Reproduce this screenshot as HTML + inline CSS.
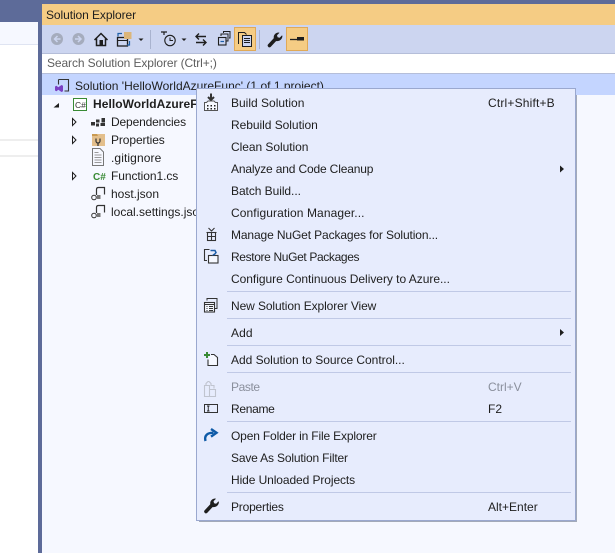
<!DOCTYPE html>
<html><head><meta charset="utf-8"><style>
html,body{margin:0;padding:0}
body{width:615px;height:553px;overflow:hidden;position:relative;background:#fff;font-family:"Liberation Sans",sans-serif;font-size:12px;color:#1e1e1e}
.a{position:absolute}
.t{position:absolute;white-space:nowrap;line-height:22px;height:22px}
.m{left:231px}
.k{left:488px}
.s{position:absolute;left:227px;width:344px;height:1px;background:#c0c9e6}
svg{position:absolute;overflow:visible}
.tree{left:111px}
</style></head><body>
<div class="a" style="left:0;top:0;width:615px;height:4px;background:#5d6b99"></div>
<div class="a" style="left:0;top:0;width:42px;height:22px;background:#5d6b99"></div>
<div class="a" style="left:0;top:22px;width:38px;height:23px;background:#f6f8ff"></div>
<div class="a" style="left:0;top:44px;width:38px;height:1px;background:#dfe4f2"></div>
<div class="a" style="left:0;top:139px;width:38px;height:2px;background:#eeeeee"></div>
<div class="a" style="left:0;top:155px;width:38px;height:2px;background:#eeeeee"></div>
<div class="a" style="left:38px;top:22px;width:4px;height:531px;background:#5d6b99"></div>
<div class="a" style="left:42px;top:4px;width:573px;height:21px;background:#f5cc84"></div>
<div class="t" style="left:46px;top:5px;line-height:21px;color:#1e1e1e;letter-spacing:-.08px">Solution Explorer</div>
<div class="a" style="left:42px;top:25px;width:573px;height:28px;background:#ccd5f0"></div>
<div class="a" style="left:42px;top:53px;width:573px;height:21px;background:#fff;border-top:1px solid #b5bed9;border-bottom:1px solid #b5bed9;box-sizing:border-box"></div>
<div class="t" style="left:47px;top:53px;line-height:21px;color:#5e5e5e;letter-spacing:-.1px">Search Solution Explorer (Ctrl+;)</div>
<div class="a" style="left:42px;top:74px;width:573px;height:479px;background:#f6f8ff"></div>
<div class="a" style="left:42px;top:74px;width:573px;height:21px;background:#c4d5ff"></div>

<!-- toolbar icons -->
<svg style="left:0;top:0" width="615" height="60">
<circle cx="57" cy="39" r="6" fill="#a5acbd"/><path d="M60.500 39h-5.500M57.500 36l-3 3 3 3" stroke="#ccd5f0" stroke-width="1.500" fill="none"/>
<circle cx="78.500" cy="39" r="6" fill="#a5acbd"/><path d="M75 39h5.500M78 36l3 3-3 3" stroke="#ccd5f0" stroke-width="1.500" fill="none"/>
<path d="M94.500 40L101 33.500l6.500 6.500M96.500 38.500v7h9v-7" fill="none" stroke="#1e1e1e" stroke-width="1.500"/><rect x="99.500" y="40" width="3.500" height="5.500" fill="#1e1e1e"/>
<rect x="117.500" y="37.500" width="10" height="8.500" fill="none" stroke="#1e1e1e" stroke-width="1.300"/><path d="M117 40.500h11" stroke="#1e1e1e"/>
<rect x="124" y="32" width="7.500" height="7" fill="#dcb67a"/><path d="M122 33.500h-4v3" stroke="#1e5fa8" stroke-width="1.200" fill="none"/><path d="M129.500 41v4h-2.500" stroke="#1e5fa8" stroke-width="1.200" fill="none"/>
<path d="M138.500 38.500h5l-2.500 2.500z" fill="#1e1e1e"/>
<rect x="150" y="30" width="1" height="19" fill="#a9b3cf"/>
<path d="M161 32h6M164 32v3" stroke="#1e1e1e" stroke-width="1.200"/><circle cx="170" cy="40.500" r="5.200" fill="none" stroke="#1e1e1e" stroke-width="1.100"/><path d="M170 37.500v3h3" fill="none" stroke="#1e1e1e"/>
<path d="M181.500 38.500h5l-2.500 2.500z" fill="#1e1e1e"/>
<path d="M196 36.500h10M199 33.500l-3 3 3 3M206 42.500h-10M203 39.500l3 3-3 3" fill="none" stroke="#1e1e1e" stroke-width="1.400"/>
<rect x="218.500" y="37.500" width="7.500" height="7.500" fill="none" stroke="#1e1e1e" stroke-width="1.100"/><path d="M221 36v-2h7v7h-1.500M223.500 33v-1.500h6.500v6.500h-1" fill="none" stroke="#1e1e1e"/><path d="M220.500 41.500h3.500" stroke="#1e5fa8" stroke-width="1.200"/>
<rect x="234.500" y="27.500" width="21" height="23" fill="#f5cc84" stroke="#e0a957"/>
<path d="M238.500 44V32.500h6l2 2" fill="none" stroke="#1e1e1e"/><rect x="242.500" y="35.500" width="9" height="11" fill="#ccd5f0" stroke="#1e1e1e"/><path d="M244 38.500h6M244 40.500h6M244 42.500h6" stroke="#1e1e1e"/>
<rect x="259" y="30" width="1" height="19" fill="#a9b3cf"/>
<path d="M269.500 45.500l6.500-7" stroke="#1e1e1e" stroke-width="3.600" stroke-linecap="round"/><path d="M274 39c-1-3 .5-6 4.500-6.500l1 .2-2.500 2.500.6 2 2 .6 2.500-2.500.3 1c-.3 3.500-3.400 5.500-6.600 4.700z" fill="#1e1e1e"/>
<rect x="286.500" y="27.500" width="21" height="23" fill="#f5cc84" stroke="#e0a957"/>
<path d="M290 39.500h7" stroke="#1e1e1e" stroke-width="1.300"/><rect x="297" y="37" width="7" height="3.500" fill="#1e1e1e"/>
</svg>

<!-- tree -->
<div class="t" style="left:75px;top:75px;letter-spacing:.01px">Solution 'HelloWorldAzureFunc' (1 of 1 project)</div>
<div class="t" style="left:93px;top:93px;font-weight:bold;width:103px;overflow:hidden;letter-spacing:.05px">HelloWorldAzureFunc</div>
<div class="t tree" style="top:111px;letter-spacing:-.15px">Dependencies</div>
<div class="t tree" style="top:129px;letter-spacing:-.1px">Properties</div>
<div class="t tree" style="top:147px;letter-spacing:.1px">.gitignore</div>
<div class="t tree" style="top:165px;letter-spacing:-.07px">Function1.cs</div>
<div class="t tree" style="top:183px">host.json</div>
<div class="t tree" style="top:201px;width:85px;overflow:hidden">local.settings.json</div>
<svg style="left:0;top:0" width="200" height="230">
<path d="M58.500 79.500h10v11.500h-4M58.500 79.500v5" fill="none" stroke="#333" stroke-width="1.100"/>
<path d="M55 86.500l1.500-.8 1.800 1.600 3.200-2.300 1.500.8v5.400l-1.500.8-3.200-2.300-1.800 1.600-1.500-.8z" fill="#7a3fc4"/>
<path d="M59 103v4.500h-5.500z" fill="#1e1e1e"/>
<rect x="73.500" y="98.500" width="13" height="12" fill="#fff" stroke="#388a34"/>
<text x="75" y="108" font-family="Liberation Sans" font-size="8.500" fill="#333">C#</text>
<path d="M72.500 118.500v7l3.500-3.500zM72.500 136.500v7l3.500-3.500zM72.500 172.500v7l3.500-3.500z" fill="#f6f8ff" stroke="#1e1e1e"/>
<path d="M91 122h4v3.500h-4zM96 119.500h3.500v3h-3.500zM101.500 118h3.500v4.500h-3.500zM96 123.500h3v3h-3zM100.500 123h4.500v3h-4.500z" fill="#333"/>
<path d="M92 134h13v12H92z" fill="#e3bf8c"/><path d="M92 134h5l1 2h-6z" fill="#c99a52"/><path d="M96 138.500v2.500a1.800 1.800 0 0 0 4 0v-2.500M98 143v3" stroke="#333" fill="none" stroke-width="1.200"/>
<path d="M92.500 148.500h7.500l3.500 3.500v13.500h-11z" fill="#f6f8ff" stroke="#777"/><path d="M94.500 152.500h4M94.500 155h7M94.500 157.500h7M94.500 160h7M94.500 162.500h7" stroke="#999"/>
<text x="93" y="180" font-family="Liberation Sans" font-size="10" fill="#388a34" font-weight="bold">C#</text>
<path d="M96.500 195v-5.500q0-2 2-2h6v7" fill="none" stroke="#333" stroke-width="1.200"/><circle cx="94" cy="197.500" r="2.300" fill="none" stroke="#333"/><rect x="97" y="195" width="3.500" height="4" fill="#777"/>
<path d="M96.500 213v-5.500q0-2 2-2h6v7" fill="none" stroke="#333" stroke-width="1.200"/><circle cx="94" cy="215.500" r="2.300" fill="none" stroke="#333"/><rect x="97" y="213" width="3.500" height="4" fill="#777"/>
</svg>

<!-- menu -->
<div class="a" style="left:199px;top:95px;width:378px;height:427px;background:#8e96a8;opacity:.8"></div>
<div class="a" style="left:196px;top:88px;width:379.500px;height:432.500px;box-sizing:border-box;background:#e7ecfd;border:1px solid #9aa8cf"></div>

<div class="t m" style="top:92px;letter-spacing:0">Build Solution</div><div class="t k" style="top:92px;letter-spacing:.18px">Ctrl+Shift+B</div>
<div class="t m" style="top:114px;letter-spacing:-.04px">Rebuild Solution</div>
<div class="t m" style="top:136px;letter-spacing:-.05px">Clean Solution</div>
<div class="t m" style="top:158px;letter-spacing:-.16px">Analyze and Code Cleanup</div>
<div class="t m" style="top:180px;letter-spacing:-.06px">Batch Build...</div>
<div class="t m" style="top:202px;letter-spacing:.09px">Configuration Manager...</div>
<div class="t m" style="top:224px;letter-spacing:-.12px">Manage NuGet Packages for Solution...</div>
<div class="t m" style="top:246px;letter-spacing:-.36px">Restore NuGet Packages</div>
<div class="t m" style="top:268px;letter-spacing:-.03px">Configure Continuous Delivery to Azure...</div>
<div class="s" style="top:291px"></div>
<div class="t m" style="top:295px;letter-spacing:-.1px">New Solution Explorer View</div>
<div class="s" style="top:318px"></div>
<div class="t m" style="top:322px;letter-spacing:.09px">Add</div>
<div class="s" style="top:345px"></div>
<div class="t m" style="top:349px;letter-spacing:-.03px">Add Solution to Source Control...</div>
<div class="s" style="top:372px"></div>
<div class="t m" style="top:376px;color:#8a8f9c;letter-spacing:-.4px">Paste</div><div class="t k" style="top:376px;color:#8a8f9c">Ctrl+V</div>
<div class="t m" style="top:398px;letter-spacing:-.3px">Rename</div><div class="t k" style="top:398px">F2</div>
<div class="s" style="top:421px"></div>
<div class="t m" style="top:425px;letter-spacing:-.16px">Open Folder in File Explorer</div>
<div class="t m" style="top:447px;letter-spacing:-.17px">Save As Solution Filter</div>
<div class="t m" style="top:469px;letter-spacing:-.09px">Hide Unloaded Projects</div>
<div class="s" style="top:492px"></div>
<div class="t m" style="top:496px;letter-spacing:-.2px">Properties</div><div class="t k" style="top:496px">Alt+Enter</div>

<svg style="left:0;top:0" width="615" height="553">
<path d="M560 165.500l4 3.500-4 3.500zM560 329l4 3.500-4 3.500z" fill="#1e1e1e"/>
<!-- build -->
<path d="M211 93.500v5M208 97l3 3 3-3" stroke="#333" stroke-width="2" fill="none"/>
<path d="M204.500 102.500h2l1.500-1.500h6l1.500 1.500h2v8h-13z" fill="#f6f8ff" stroke="#555"/>
<path d="M207 105h1.500v1.500H207zM210.500 105h1.500v1.500h-1.500zM214 105h1.500v1.500H214zM207 108h1.500v1.500H207zM210.500 108h1.500v1.500h-1.500zM214 108h1.500v1.500H214z" fill="#1e1e1e"/>
<!-- nuget gift -->
<rect x="207.500" y="232.500" width="8" height="8" fill="none" stroke="#333" stroke-width="1.100"/><path d="M206.500 232.500h10M211.500 232v9M207.500 236.500h8" stroke="#333" stroke-width="1.100"/><path d="M208.500 228l3 3 3-3" fill="none" stroke="#333" stroke-width="1.100"/>
<!-- restore -->
<path d="M209.500 249.500h-5v11h2.500" fill="none" stroke="#333" stroke-width="1.100"/><rect x="208.500" y="255.500" width="9.500" height="7.500" fill="#f6f8ff" stroke="#333" stroke-width="1.100"/><path d="M210.500 250.500h4.500l1 2-2 2.500" fill="none" stroke="#1e5fa8" stroke-width="1.500"/><path d="M212.500 255.500l1.500-1.500" stroke="#1e5fa8"/>
<!-- new view -->
<rect x="204.500" y="302.500" width="10" height="9.500" fill="#f6f8ff" stroke="#333" stroke-width="1.100"/><path d="M204.500 304.500h10M206.500 306.500h1M209 306.500h4M206.500 308.500h1M209 308.500h4M206.500 310.500h1M209 310.500h4" stroke="#333"/><path d="M207 300.500v-2h10v10h-2" fill="none" stroke="#333"/>
<!-- add source control -->
<path d="M204 355h6M207 352v6" stroke="#388a34" stroke-width="2"/><path d="M211 354.500h3l3.500 3v8h-9.500v-6" fill="#f6f8ff" stroke="#333" stroke-width="1.100"/>
<!-- paste -->
<path d="M204.500 385.500h5v11h-5zM209.500 389.500h6v7h-6zM206 385.500v-2l2-2h1l2 2v2h3v3" fill="none" stroke="#c0c4cf" stroke-width="1.100"/>
<!-- rename -->
<rect x="204.500" y="404.500" width="13" height="8" fill="none" stroke="#333"/><path d="M207 406h2.500M207 411h2.500M208.250 406v5" stroke="#1e1e1e" stroke-width=".9"/>
<!-- open folder -->
<path d="M205.500 441c-1.500-5.500 2-8.500 8-8.200M211 429l5.500 3.800-5.500 3.800" fill="none" stroke="#0e5aa7" stroke-width="2.400"/>
<!-- wrench -->
<path d="M206 511.500l6.500-7" stroke="#1e1e1e" stroke-width="3.600" stroke-linecap="round"/><path d="M210.500 505c-1-3 .5-6 4.500-6.500l1 .2-2.500 2.500.6 2 2 .6 2.500-2.500.3 1c-.3 3.500-3.400 5.500-6.600 4.700z" fill="#1e1e1e"/>
</svg>
</body></html>
